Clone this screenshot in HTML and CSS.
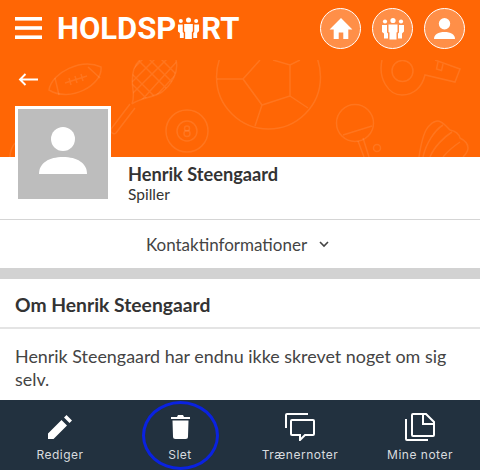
FILE: index.html
```html
<!DOCTYPE html>
<html lang="en">
<head>
    <meta charset="UTF-8">
    <meta name="viewport" content="width=device-width, initial-scale=1.0">
    <title>Holdsport</title>
    <link rel="stylesheet" href="styles.css">
</head>
<body>
    <header class="header">
        <svg class="pattern" width="480" height="157" viewBox="0 0 480 157" fill="none">
            <defs>
                <clipPath id="patternClip"><rect x="0" y="60" width="480" height="97"/></clipPath>
                <clipPath id="racketClip"><path d="M140 60C133 66 131 76 133 90c1 7 0 11-1 14 8-6 20-6 30-12 10-8 17-20 14-32z"/></clipPath>
            </defs>
            <g clip-path="url(#patternClip)">
                <!-- football -->
                <path d="M49 90C52 72 82 58 101 67 103 85 70 103 49 90z"/>
                <path d="M55 78l4 17M88 67l12 11M65 83l22-7M69 78l2 7M75 76l2 7M81 74l2 7"/>
                <!-- racket -->
                <path d="M140 60C133 66 131 76 133 90c1 7 0 11-1 14M176 60c3 12-4 24-14 32-10 6-22 6-30 12"/>
                <g clip-path="url(#racketClip)">
                    <path d="M128 70l32 32M128 80l22 22M136 58l32 32M148 58l26 26M160 58l20 20M144 58l-16 16M156 58l-28 28M168 58l-40 40M180 58l-40 44M180 70l-26 28"/>
                </g>
                <path d="M130 104l-19 25c-1 3 2 6 5 4l19-25"/>
                <!-- 8 ball -->
                <circle cx="187" cy="131" r="21"/>
                <circle cx="187" cy="131" r="10"/>
                <circle cx="187" cy="128.500" r="2.500"/>
                <circle cx="187" cy="133.500" r="3"/>
                <!-- soccer ball -->
                <circle cx="268.500" cy="77" r="52"/>
                <path d="M217 79h26l17-19M243 79l19 26 28-9V65M273 60l17 5 10-5M290 96l18 12M262 105l-7 21"/>
                <!-- whistle -->
                <circle cx="402.500" cy="71" r="10.500"/>
                <path d="M382 60c-4 18 6 35 20 35 12 0 20-8 23-20l30 7 5-13-25-9M438 62l-1.500 7 5 1.500 1.500-6.500"/>
                <!-- table tennis -->
                <circle cx="355" cy="123" r="18.500"/>
                <path d="M343 135l29-9M358 141l6 16M363 138l6 19"/>
                <circle cx="377" cy="148" r="3.500"/>
                <!-- shuttlecock -->
                <path d="M419 157c2-14 6-28 11-32 3-3 6-4 8-4 4 0 8 5 12 9 5 1 9 4 10 8 4 2 8 6 8 10 0 3-2 6-5 9"/>
                <path d="M423 157c3-14 12-27 20-32M430 157c4-10 14-20 22-25M443 157c5-6 11-11 17-15"/>
                <!-- behind the avatar -->
                <path d="M10 157c0-5 2-10 5-14"/>
            </g>
        </svg>
        <div class="topbar">
            <svg class="burger" width="27" height="22" viewBox="0 0 27 22" fill="#fff">
                <rect width="27" height="3.600" y="0"/><rect width="27" height="3.600" y="9.200"/><rect width="27" height="3.600" y="18.400"/>
            </svg>
            <div class="logo">
                <span>HOLDSP</span>
                <svg class="logo-icon" width="23" height="22" viewBox="0 0 24 22" preserveAspectRatio="none" fill="#fff">
                    <circle cx="12" cy="3" r="2.600"/><circle cx="4" cy="4" r="2.100"/><circle cx="20" cy="4" r="2.100"/>
                    <path d="M7.500 7h9v7.500l-1 .5V22H8.500v-7l-1-.5z"/>
                    <path d="M1 7.500h5V15l1 1v5H3v-5l-2-1.500zM18 7.500h5V14l-2 2v5h-4v-5l1-1z"/>
                </svg>
                <span>RT</span>
            </div>
            <div class="nav-icons">
                <span class="round-btn">
                    <svg width="24" height="21" viewBox="0 0 26 23" fill="#fff"><path d="M13 0L0.500 12.500H5V23h5.500v-7h5v7H21V12.500h4.500z"/></svg>
                </span>
                <span class="round-btn">
                    <svg width="24" height="23" viewBox="0 0 24 22" fill="#fff">
                        <circle cx="12" cy="3" r="2.600"/><circle cx="4" cy="4" r="2.100"/><circle cx="20" cy="4" r="2.100"/>
                        <path d="M7.500 7h9v7.500l-1 .5V22H8.500v-7l-1-.5z"/>
                        <path d="M1 7.500h5V15l1 1v5H3v-5l-2-1.500zM18 7.500h5V14l-2 2v5h-4v-5l1-1z"/>
                    </svg>
                </span>
                <span class="round-btn">
                    <svg width="21" height="21" viewBox="0 0 24 24" fill="#fff"><circle cx="12" cy="6.500" r="6.500"/><path d="M0 24c0-5.500 5-8 12-8s12 2.500 12 8z"/></svg>
                </span>
            </div>
        </div>
        <svg class="back" width="20" height="13" viewBox="0 0 20 13" fill="none" stroke="#fff" stroke-width="1.900">
            <path d="M20 6.500H2M7.500 1L2 6.500 7.500 12"/>
        </svg>
    </header>

    <section class="profile">
        <div class="avatar">
            <svg width="48" height="47" viewBox="0 0 48 47" fill="#fff"><circle cx="24" cy="12" r="12"/><path d="M0 47c0-11 10-17 24-17s24 6 24 17z"/></svg>
        </div>
        <div class="profile-text">
            <div class="name">Henrik Steengaard</div>
            <div class="role">Spiller</div>
        </div>
    </section>

    <div class="contact">
        <span>Kontaktinformationer</span>
        <svg width="10" height="7" viewBox="0 0 10 7" fill="none" stroke="#444" stroke-width="1.600"><path d="M1 1l4 4 4-4"/></svg>
    </div>

    <h2 class="about-title">Om Henrik Steengaard</h2>
    <p class="about-text">Henrik Steengaard har endnu ikke skrevet noget om sig selv.</p>

    <nav class="footer">
        <div class="tab">
            <svg class="icon-raised" width="24" height="24" viewBox="0 0 24 24" fill="#fff"><path d="M0 24v-5.500L13.500 5l5.500 5.500L5.500 24zM16 2.500L18.500 0 24 5.500 21.500 8z"/></svg>
            <span>Rediger</span>
        </div>
        <div class="tab">
            <svg class="icon-raised" width="19" height="24" viewBox="0 0 19 24" fill="#fff"><path d="M0 2h6l1-2h5l1 2h6v2H0zM1.500 5.500h16L17 21.500a2.500 2.500 0 0 1-2.500 2.500h-10A2.500 2.500 0 0 1 2 21.500z"/></svg>
            <span>Slet</span>
        </div>
        <div class="tab">
            <svg width="30" height="28" viewBox="0 0 30 28" fill="none" stroke="#fff" stroke-width="2"><path d="M1 15V2a1 1 0 0 1 1-1h21"/><path d="M7 7h21a1 1 0 0 1 1 1v13a1 1 0 0 1-1 1h-8l-5 5v-5H7a1 1 0 0 1-1-1V8a1 1 0 0 1 1-1z"/></svg>
            <span>Trænernoter</span>
        </div>
        <div class="tab">
            <svg width="30" height="28" viewBox="0 0 30 28" fill="none" stroke="#fff" stroke-width="2"><path d="M1 6v20a1 1 0 0 0 1 1h21"/><path d="M8 1h13l8 8v13a1 1 0 0 1-1 1H8a1 1 0 0 1-1-1V2a1 1 0 0 1 1-1z"/><path d="M18 1v10h11"/></svg>
            <span>Mine noter</span>
        </div>
        <div class="highlight"></div>
    </nav>
</body>
</html>
```

FILE: styles.css
```css
* {
    box-sizing: border-box;
}
body {
    margin: 0;
    height: 470px;
    overflow: hidden;
    background-color: #fff;
    color: #333;
    font-family: Lato, sans-serif;
    display: flex;
    flex-direction: column;
}
.header {
    position: relative;
    height: 157px;
    flex: none;
    background-color: #ff6605;
    padding: 8px 15px 0;
}
.pattern {
    position: absolute;
    left: 0;
    top: 0;
    stroke: rgba(255, 255, 255, 0.1);
    stroke-width: 1.5;
}
.topbar {
    position: relative;
    display: flex;
    align-items: center;
    height: 40px;
}
.burger {
    flex: none;
}
.logo {
    display: flex;
    align-items: center;
    margin-left: 15px;
    color: #fff;
    font-family: Roboto, sans-serif;
    font-weight: 700;
    font-size: 31px;
    letter-spacing: 0;
}
.logo-icon {
    margin: 0 1px;
}
.nav-icons {
    display: flex;
    gap: 11px;
    margin-left: auto;
}
.round-btn {
    width: 41px;
    height: 41px;
    display: flex;
    align-items: center;
    justify-content: center;
    border: 1px solid #fff;
    border-radius: 50%;
    background-color: rgba(255, 255, 255, 0.27);
}
.back {
    position: relative;
    display: block;
    margin: 25px 0 0 3px;
}
.profile {
    display: flex;
    align-items: flex-end;
    height: 63px;
    flex: none;
    padding: 0 15px;
    border-bottom: 1px solid #d5d5d5;
}
.avatar {
    position: relative;
    width: 96px;
    height: 96px;
    flex: none;
    margin-top: -51px;
    margin-bottom: 17px;
    padding-bottom: 7px;
    border: 3px solid #fff;
    background-color: #bdbdbd;
    display: flex;
    align-items: center;
    justify-content: center;
}
.profile-text {
    margin-left: 17px;
    margin-bottom: 15px;
}
.name {
    font-size: 18.200px;
    font-weight: 700;
    line-height: 22px;
}
.role {
    font-size: 15.500px;
    line-height: 19px;
}
.contact {
    height: 59px;
    flex: none;
    padding: 1px 5px 0 0;
    display: flex;
    align-items: center;
    justify-content: center;
    gap: 12px;
    color: #444;
    font-size: 17px;
    border-bottom: 11px solid #d2d2d2;
}
.about-title {
    margin: 0;
    height: 50px;
    flex: none;
    padding: 0 15px;
    font-size: 19.300px;
    font-weight: 700;
    line-height: 51px;
    border-bottom: 2px solid #e4e4e4;
}
.about-text {
    margin: 0;
    padding: 16px 15px 0;
    flex: 1;
    color: #444;
    font-size: 17.900px;
    line-height: 23px;
}
.footer {
    position: relative;
    height: 70px;
    flex: none;
    display: grid;
    grid-template-columns: repeat(4, 1fr);
    background-color: #22313f;
    color: #d9dcdf;
    font-family: Inter, sans-serif;
    font-size: 12px;
    letter-spacing: 0.500px;
}
.tab {
    display: flex;
    flex-direction: column;
    align-items: center;
    justify-content: flex-end;
    gap: 6px;
    padding-bottom: 8px;
}
.icon-raised {
    margin-bottom: 2px;
}
.highlight {
    position: absolute;
    left: 142px;
    top: 1px;
    width: 77px;
    height: 69px;
    border: 3px solid #0a22e0;
    border-radius: 50%;
}
```
